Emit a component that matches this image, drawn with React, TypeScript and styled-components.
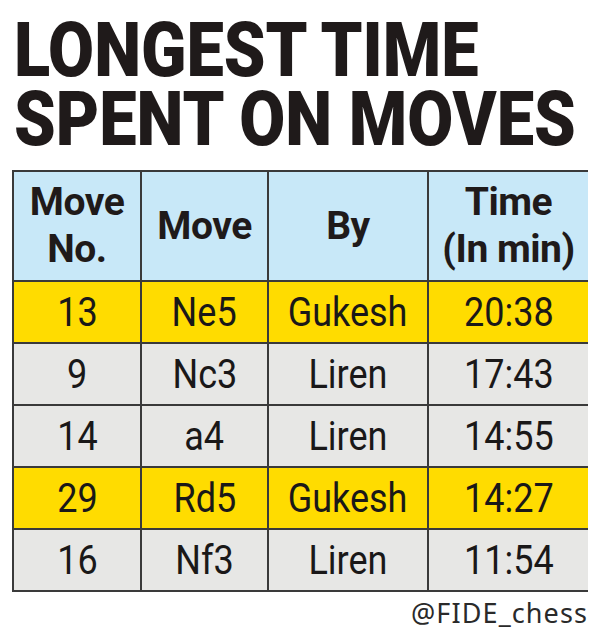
import React from "react";
import styled, { createGlobalStyle } from "styled-components";

const GlobalStyle = createGlobalStyle`
  html, body { margin: 0; padding: 0; background: #ffffff; }
  body { font-family: Roboto, "Liberation Sans", sans-serif; color: #1c1a1a; }
`;

const Page = styled.div`
  width: 600px;
  height: 637px;
  box-sizing: border-box;
  padding: 16px 12px 0 12px;
  background: #fff;
  overflow: hidden;
`;

const Title = styled.h1`
  margin: 0 0 0 2px;
  font-family: Roboto, "Liberation Sans", sans-serif;
  font-weight: 900;
  font-size: 76px;
  line-height: 69px;
  color: #1f1a1a;
  letter-spacing: 0;
`;

const TitleLine = styled.span`
  display: block;
  white-space: nowrap;
  transform: scaleX(0.878);
  transform-origin: left center;
`;

const Table = styled.div`
  margin-top: 16px;
  display: grid;
  grid-template-columns: 126px 125px 158px 159px;
  grid-auto-rows: 60px;
  grid-template-rows: 108px;
  gap: 2px;
  padding: 2px;
  background: #3a3a3a;
  width: 576px;
  box-sizing: border-box;
`;

const HeadCell = styled.div`
  background: #c8e8f8;
  display: flex;
  align-items: center;
  justify-content: center;
  text-align: center;
  font-weight: 700;
  font-size: 39px;
  line-height: 47px;
  color: #1f1a1a;
  letter-spacing: -0.5px;
`;

const Cell = styled.div<{ $hl: boolean }>`
  background: ${(p) => (p.$hl ? "#ffdc00" : "#e7e7e5")};
  display: flex;
  align-items: center;
  justify-content: center;
  font-size: 40px;
  font-weight: 400;
  color: #1a1818;
`;

const CellText = styled.span`
  display: inline-block;
  transform: scaleX(0.9);
  white-space: nowrap;
`;

const Credit = styled.div`
  text-align: right;
  font-family: "Noto Sans", "Open Sans", sans-serif;
  font-size: 27px;
  letter-spacing: 1.1px;
  color: #2a2a2a;
  margin-top: 5px;
  line-height: 32px;
`;

const rows = [
  { no: "13", move: "Ne5", by: "Gukesh", time: "20:38", hl: true },
  { no: "9", move: "Nc3", by: "Liren", time: "17:43", hl: false },
  { no: "14", move: "a4", by: "Liren", time: "14:55", hl: false },
  { no: "29", move: "Rd5", by: "Gukesh", time: "14:27", hl: true },
  { no: "16", move: "Nf3", by: "Liren", time: "11:54", hl: false },
];

export default function App() {
  return (
    <>
      <GlobalStyle />
      <Page>
        <Title>
          <TitleLine>LONGEST TIME</TitleLine>
          <TitleLine>SPENT ON MOVES</TitleLine>
        </Title>
        <Table>
          <HeadCell>
            Move
            <br />
            No.
          </HeadCell>
          <HeadCell>Move</HeadCell>
          <HeadCell>By</HeadCell>
          <HeadCell>
            Time
            <br />
            (In min)
          </HeadCell>
          {rows.map((r) => (
            <React.Fragment key={r.no}>
              <Cell $hl={r.hl}><CellText>{r.no}</CellText></Cell>
              <Cell $hl={r.hl}><CellText>{r.move}</CellText></Cell>
              <Cell $hl={r.hl}><CellText>{r.by}</CellText></Cell>
              <Cell $hl={r.hl}><CellText>{r.time}</CellText></Cell>
            </React.Fragment>
          ))}
        </Table>
        <Credit>@FIDE_chess</Credit>
      </Page>
    </>
  );
}
